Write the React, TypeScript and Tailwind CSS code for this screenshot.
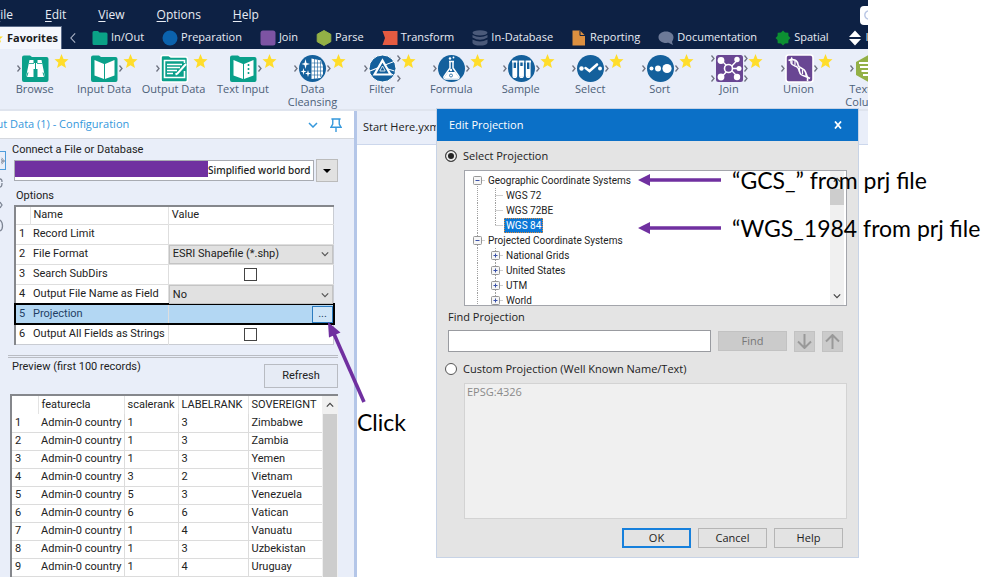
import React from "react";

const WHITE = "#ffffff";

type Cat = { label: string; icon: React.ReactNode };

const categories: Cat[] = [
  { label: "In/Out", icon: <path d="M0.5 2.5Q0.5 1 2 1H6L7.5 2.5H14Q15.5 2.5 15.5 4V13.5Q15.5 15 14 15H2Q0.5 15 0.5 13.5Z" fill="#0aa287" /> },
  { label: "Preparation", icon: <circle cx="8" cy="8" r="7.5" fill="#0b62ad" /> },
  { label: "Join", icon: <rect x="0.5" y="0.5" width="15" height="15" rx="2.5" fill="#7d54a3" /> },
  { label: "Parse", icon: <path d="M8 0.5L14.8 4.3V11.7L8 15.5L1.2 11.7V4.3Z" fill="#93b046" stroke="#93b046" strokeLinejoin="round" /> },
  { label: "Transform", icon: <path d="M0.5 1H15.5V15H0.5L3 8Z" fill="#e55b41" /> },
  {
    label: "In-Database",
    icon: (
      <g fill="#4b5a7a">
        <ellipse cx="8" cy="2.8" rx="7.5" ry="2.6" />
        <path d="M0.5 5Q8 9 15.5 5V7.6Q8 12 0.5 7.6Z" />
        <path d="M0.5 9.5Q8 13.5 15.5 9.5V13Q14 15.6 8 15.6T0.5 13Z" />
      </g>
    ),
  },
  { label: "Reporting", icon: <g><path d="M1.5 0.5H9L14 5.5V15.5H1.5Z" fill="#dd9040" /><path d="M9 0.5V5.5H14" fill="none" stroke="#0d2144" strokeWidth="1" /></g> },
  { label: "Documentation", icon: <path d="M8 1.5C12.5 1.5 15.5 4 15.5 7.2C15.5 9.5 14.2 11 14 12L15 15L10.5 12.8C4.5 13.6 0.5 11 0.5 7.2C0.5 4 3.5 1.5 8 1.5Z" fill="#6d7a98" /> },
  { label: "Spatial", icon: <path d="M8 0.5L10 2.5L13.3 2.7L13.5 6L15.5 8L13.5 10L13.3 13.3L10 13.5L8 15.5L6 13.5L2.7 13.3L2.5 10L0.5 8L2.5 6L2.7 2.7L6 2.5Z" fill="#0c9032" /> },
  { label: "Interface", icon: <path d="M8 0.5L14 7H2ZM2 9H14L8 15.5Z" fill={WHITE} /> },
];

const Folder = () => <path d="M21 3.5Q21 1.5 23 1.5H29L31 3H45.5Q47.5 3 47.5 5V26Q47.5 28 45.5 28H23Q21 28 21 26Z" fill="#0aa08a" />;
const Disc = () => <circle cx="34.5" cy="14.5" r="13.5" fill="#14609c" />;
const Square = () => <rect x="21" y="1" width="27" height="27" rx="2.5" fill="#694693" />;

type Tool = { label: string; left: number[]; right: number[]; art: React.ReactNode };

const tools: Tool[] = [
  {
    label: "Browse", left: [14], right: [],
    art: (
      <g>
        <Folder />
        <path d="M28.5 6H32.5V9H36.5V6H40.5L44 23H36.5V15H32.5V23H25Z" fill={WHITE} />
        <path d="M34.5 9V15M27 18.5L25.5 23M42 18.5L43.5 23" stroke="#0aa08a" strokeWidth="1" />
        <path d="M28 9.5H33M36 9.5H41" stroke="#0aa08a" strokeWidth="0.8" />
      </g>
    ),
  },
  {
    label: "Input Data", left: [], right: [14],
    art: (
      <g>
        <Folder />
        <path d="M24.5 6L34 10V25L24.5 21.5ZM44.5 6L35 10V25L44.5 21.5Z" fill={WHITE} />
      </g>
    ),
  },
  {
    label: "Output Data", left: [14], right: [],
    art: (
      <g fill="none" stroke={WHITE} strokeWidth="1.6">
        <Folder />
        <path d="M44.5 9V6.5H24.5V23.5H44.5V17" />
        <path d="M27 10.5H42M27 13.5H40M27 16.5H37M27 19.5H33" strokeWidth="1.4" />
        <path d="M46 10L37.5 19.5L35.5 20.5" strokeWidth="2" />
      </g>
    ),
  },
  {
    label: "Text Input", left: [], right: [14],
    art: (
      <g>
        <Folder />
        <path d="M24.5 6L34 10V25L24.5 21.5ZM44.5 6L35 10V25L44.5 21.5Z" fill={WHITE} />
        <path d="M39.5 10V22" stroke="#0aa08a" strokeWidth="1.6" strokeDasharray="2 2" />
      </g>
    ),
  },
  {
    label: "Data Cleansing", left: [14], right: [14],
    art: (
      <g>
        <Disc />
        <path d="M33.5 4.5L43 6.5L45 12V20L42.5 24L33.5 25Z" fill={WHITE} />
        <path d="M36.5 5V25M39.5 6V24M42.5 7V23M33.5 9H44M33.5 13H45M33.5 17H45M33.5 21H44" stroke="#14609c" strokeWidth="0.6" />
        <path d="M27.5 5L28.5 9L32 10L28.5 11L27.5 15L26.5 11L23.5 10L26.5 9ZM25.5 14L26.2 16.8L28.5 17.5L26.2 18.2L25.5 21L24.8 18.2L22.5 17.5L24.8 16.8ZM30 16L30.8 18.7L33 19.5L30.8 20.3L30 23L29.2 20.3L27 19.5L29.2 18.7Z" fill={WHITE} />
      </g>
    ),
  },
  {
    label: "Filter", left: [14], right: [4, 24],
    art: (
      <g fill="none" stroke={WHITE}>
        <Disc />
        <path d="M22 17L32 13" strokeWidth="1.2" />
        <path d="M37 11L46 7.5M37 14L46.5 17M38 17L45.5 21" strokeWidth="1" />
        <path d="M34.5 6.5L42.5 20.5H26.5Z" strokeWidth="2.2" fill="#14609c" />
        <path d="M34.5 12L37.2 17H31.8Z" strokeWidth="0.8" />
      </g>
    ),
  },
  {
    label: "Formula", left: [14], right: [14],
    art: (
      <g>
        <Disc />
        <path d="M32 7.5H37M33 8V14L27 22.5Q26.5 25 29 25H40Q42.5 25 42 22.5L36 14V8" fill="none" stroke={WHITE} strokeWidth="1.5" />
        <path d="M31 18H38L41.5 23Q42 24.5 40 24.5H29Q27 24.5 27.5 23Z" fill={WHITE} />
        <circle cx="34" cy="16" r="1.2" fill={WHITE} />
        <circle cx="33" cy="4.5" r="1.2" fill={WHITE} />
        <circle cx="36.5" cy="3.5" r="0.9" fill={WHITE} />
        <circle cx="34" cy="21.5" r="1.5" fill="none" stroke="#14609c" strokeWidth="0.8" />
      </g>
    ),
  },
  {
    label: "Sample", left: [14], right: [14],
    art: (
      <g>
        <Disc />
        <path d="M25 7.5H30.5M31.8 7.5H37.3M38.6 7.5H44" stroke={WHITE} strokeWidth="1.8" />
        <path d="M26 8V21.5Q26 23.5 27.8 23.5T29.6 21.5V8M32.7 8V21.5Q32.7 23.5 34.5 23.5T36.3 21.5V8M39.4 8V21.5Q39.4 23.5 41.2 23.5T43 21.5V8" fill="none" stroke={WHITE} strokeWidth="1.2" />
        <path d="M26 14H29.6V22Q27.8 24 26 22ZM32.7 12H36.3V22Q34.5 24 32.7 22ZM39.4 15H43V22Q41.2 24 39.4 22Z" fill={WHITE} />
      </g>
    ),
  },
  {
    label: "Select", left: [14], right: [14],
    art: (
      <g>
        <Disc />
        <circle cx="25.5" cy="14.5" r="2.2" fill={WHITE} />
        <circle cx="44" cy="14.5" r="2" fill={WHITE} />
        <path d="M29.5 14L33.5 17L41 10.5" fill="none" stroke={WHITE} strokeWidth="2.6" strokeLinecap="round" />
      </g>
    ),
  },
  {
    label: "Sort", left: [14], right: [14],
    art: (
      <g fill={WHITE}>
        <Disc />
        <circle cx="25.5" cy="14.5" r="2" />
        <circle cx="32" cy="14.5" r="3" />
        <circle cx="41" cy="14.5" r="4.6" />
      </g>
    ),
  },
  {
    label: "Join", left: [4, 24], right: [4, 14, 24],
    art: (
      <g fill={WHITE}>
        <Square />
        <path d="M27 7L42 22M42 6.5L27 22.5M34.5 14.5H44" stroke={WHITE} strokeWidth="1.4" />
        <circle cx="26" cy="6.5" r="3.4" />
        <circle cx="42" cy="5.5" r="2.7" />
        <circle cx="44" cy="14.5" r="2.5" />
        <circle cx="26" cy="23" r="3.4" />
        <circle cx="42" cy="23" r="3.2" />
        <circle cx="33.5" cy="14.5" r="4" fill="#694693" stroke={WHITE} strokeWidth="1.6" />
      </g>
    ),
  },
  {
    label: "Union", left: [14], right: [14],
    art: (
      <g fill="none" stroke={WHITE} strokeWidth="1.6">
        <Square />
        <path d="M27 3.500C24.500 8 26 11 30 12C35 13 33.500 18 36 20.500C38.500 22.500 41 22 45 24.500" />
        <path d="M23.500 6.500C28 4.500 32.500 6 33 10.500C33.500 15 39.500 13.500 40.500 18C41 21 43.500 22 42.500 27" />
        <path d="M27 6.500V9.500M30 6.500V11M34.500 14V18M37.500 15.500V20M41 20V23" strokeWidth="1.200" />
      </g>
    ),
  },
  {
    label: "Text To Columns", left: [14], right: [14],
    art: (
      <g>
        <path d="M34.5 1L47 8V21L34.5 28L22 21V8Z" fill="#93b046" />
        <path d="M25 9H44M26 13H43M27.5 17H41.5M29 21H40" stroke={WHITE} strokeWidth="2" />
      </g>
    ),
  },
];

function ToolIcon({ tool }: { tool: Tool }) {
  return (
    <svg viewBox="0 0 68 28" className="h-7 w-[68px] shrink-0 overflow-visible" aria-hidden="true">
      {tool.art}
      {tool.left.map((y) => (
        <path key={y} d={`M16.5 ${y - 2.5}L19 ${y + 0.5}L16.5 ${y + 3.5}`} fill="none" stroke="#6e7280" strokeWidth="1.3" />
      ))}
      {tool.right.map((y) => (
        <path key={y} d={`M49.5 ${y - 2.5}L52 ${y + 0.5}L49.5 ${y + 3.5}`} fill="none" stroke="#6e7280" strokeWidth="1.3" />
      ))}
      <path d="M60.5 0L62.5 5L67.5 5.3L63.6 8.8L65 14L60.5 11.2L56 14L57.4 8.8L53.5 5.3L58.5 5Z" fill="#ffdd2b" />
    </svg>
  );
}

function Chevron({ className }: { className: string }) {
  return (
    <svg viewBox="0 0 10 6" className={className} aria-hidden="true">
      <path d="M1 1L5 5L9 1" fill="none" stroke="currentColor" strokeWidth="1.5" />
    </svg>
  );
}

function ConfigSelect({ label, value }: { label: string; value: string }) {
  return (
    <div className="relative h-full">
      <select aria-label={label} className="block h-full w-full appearance-none border border-[#c4c4c4] bg-[#e1e1e1] px-[3px] leading-4">
        <option>{value}</option>
      </select>
      <Chevron className="pointer-events-none absolute top-1/2 right-1 h-1.5 w-2 -translate-y-1/2 text-[#555]" />
    </div>
  );
}

const options = [
  { name: "Record Limit", kind: "text" },
  { name: "File Format", kind: "select", value: "ESRI Shapefile (*.shp)" },
  { name: "Search SubDirs", kind: "check" },
  { name: "Output File Name as Field", kind: "select", value: "No" },
  { name: "Projection", kind: "button" },
  { name: "Output All Fields as Strings", kind: "check" },
];

const records = [
  ["1", "3", "Zimbabwe"],
  ["1", "3", "Zambia"],
  ["1", "3", "Yemen"],
  ["3", "2", "Vietnam"],
  ["5", "3", "Venezuela"],
  ["6", "6", "Vatican"],
  ["1", "4", "Vanuatu"],
  ["1", "3", "Uzbekistan"],
  ["1", "4", "Uruguay"],
  ["1", "2", "United States"],
];

function OptionsTable() {
  return (
    <table className="mr-1 ml-0.5 h-[140px] table-fixed border-collapse border border-[#c9ccd3] border-t-2 border-t-[#85878c] border-l-2 border-l-[#85878c] bg-white text-left">
      <colgroup>
        <col className="w-[15px]" />
        <col className="w-[137px]" />
        <col />
      </colgroup>
      <thead>
        <tr>
          <th className="border-r border-[#e3e3e3]" aria-label="Row" />
          <th className="border-r border-[#e3e3e3] px-[3px] font-normal">Name</th>
          <th className="px-[3px] font-normal">Value</th>
        </tr>
      </thead>
      <tbody>
        {options.map((o, i) => {
          const selected = o.kind === "button";
          return (
            <tr key={o.name} className={selected ? "bg-[#b3d7f3] text-[#1f3f66] outline-2 -outline-offset-1 outline-black" : "border-t border-[#dedede]"}>
              <td className="px-[3px]">{i + 1}</td>
              <td className="border-r border-[#dedede] px-[3px] whitespace-nowrap">{o.name}</td>
              <td className="h-5 p-0">
                {o.kind === "select" && <ConfigSelect label={o.name} value={o.value ?? ""} />}
                {o.kind === "check" && (
                  <input type="checkbox" aria-label={o.name} className="mx-auto block size-[13px] appearance-none border border-[#444] bg-white" />
                )}
                {selected && (
                  <button aria-label="Choose projection" className="ml-auto block h-[17px] w-[21px] border border-[#2c7cc0] bg-[#cfe5f7] leading-3">
                    ...
                  </button>
                )}
              </td>
            </tr>
          );
        })}
      </tbody>
    </table>
  );
}

function ConfigPanel() {
  return (
    <section className="flex w-[357px] shrink-0 flex-col border-r-3 border-[#b4c6e8] bg-[#e9eef9]">
      <header className="flex h-7 shrink-0 items-center border-b border-[#d5d8de] bg-white font-['Open_Sans','Noto_Sans',sans-serif] text-[11px] text-[#3598dc]">
        <h2 className="-ml-5 flex-1 whitespace-nowrap">Input Data (1) - Configuration</h2>
        <button aria-label="Collapse" className="mr-3">
          <Chevron className="h-1.5 w-2.5" />
        </button>
        <button aria-label="Pin" className="mr-3">
          <svg viewBox="0 0 13 15" className="h-4 w-3" fill="none" stroke="currentColor" strokeWidth="1.5" aria-hidden="true">
            <path d="M1.5 1H11.5M3 1V6.5L1 10H12L10 6.5V1M6.5 10V15" />
          </svg>
        </button>
      </header>
      <div className="flex min-h-0 flex-1">
        <nav className="w-2 shrink-0 overflow-hidden pt-3 text-[#7d8594]">
          <button aria-label="Configuration" className="flex h-[19px] w-1.5 items-center justify-end border border-l-0 border-[#4e9cdb]">
            <svg viewBox="0 0 5 12" className="h-3 w-1" stroke="currentColor" fill="none"><path d="M0 3L2 6L0 9M0 6H5M1 2L4 6L1 10" /></svg>
          </button>
          <svg viewBox="0 0 6 70" className="h-[70px] w-1.5" fill="none" stroke="currentColor" strokeWidth="1.3" aria-hidden="true">
            <path d="M0 9Q2 9 2 12M0 17Q2 17 2 13M0 32L2 35L0 38M0 50Q2.5 52 2.5 56T0 61" />
          </svg>
        </nav>
        <div className="flex min-w-0 flex-1 flex-col pr-4">
          <div className="flex flex-col pl-1">
            <label htmlFor="source" className="pt-0.5 leading-[18px]">Connect a File or Database</label>
            <div className="ml-0.5 flex items-center gap-0.5">
              <div className="flex h-[21px] flex-1 items-start border border-[#a8abb2] bg-white">
                <span className="h-4 w-[193px] shrink-0 bg-[#7030a0]" />
                <input id="source" defaultValue="Simplified world bord" className="h-[18px] w-0 flex-1 bg-transparent font-['Noto_Sans','Open_Sans',sans-serif] text-[10px] font-medium" />
              </div>
              <button aria-label="Choose source" className="flex h-[23px] w-[22px] items-center justify-center border border-[#bbb] bg-[#e1e1e1]">
                <svg viewBox="0 0 8 4" className="h-1 w-2" aria-hidden="true"><path d="M0 0H8L4 4Z" /></svg>
              </button>
            </div>
            <h3 className="ml-1 pt-1 leading-[19px]">Options</h3>
            <OptionsTable />
          </div>
          <hr className="mt-2.5 h-[3px] shrink-0 border-y border-[#b9bcc3]" />
          <div className="flex items-center justify-between pl-1">
            <h3 className="mb-3 leading-4">Preview (first 100 records)</h3>
            <button className="mt-1.5 h-6 w-[74px] border border-[#b8bbc2] bg-[#e6ebf5]">Refresh</button>
          </div>
          <div className="mt-1.5 ml-0.5 flex min-h-0 flex-1 overflow-hidden border-t-2 border-l-2 border-[#85878c] bg-white">
            <div className="min-w-0 flex-1 overflow-hidden">
              <table className="w-full table-fixed border-collapse text-left whitespace-nowrap">
                <colgroup>
                  <col className="w-[26px]" />
                  <col className="w-[86px]" />
                  <col className="w-[54px]" />
                  <col className="w-[70px]" />
                  <col />
                </colgroup>
                <thead>
                  <tr className="h-[18px]">
                    <th className="border-r border-[#e3e3e3]" aria-label="Row" />
                    {["featurecla", "scalerank", "LABELRANK", "SOVEREIGNT"].map((h) => (
                      <th key={h} className="border-r border-[#e3e3e3] px-[3px] font-normal last:border-r-0">{h}</th>
                    ))}
                  </tr>
                </thead>
                <tbody>
                  {records.map((r, i) => (
                    <tr key={r[2]} className="h-[18px] border-b border-[#dcdcdc]">
                      <td className="px-[3px]">{i + 1}</td>
                      <td className="px-[3px]">Admin-0 country</td>
                      {r.map((v, j) => (
                        <td key={j} className="border-l border-[#dcdcdc] px-[3px]">{v}</td>
                      ))}
                    </tr>
                  ))}
                </tbody>
              </table>
            </div>
            <div className="flex w-4 flex-col items-center bg-[#f0f0f0]">
              <Chevron className="my-1.5 h-1.5 w-2 rotate-180 text-[#444]" />
              <div className="w-3.5 flex-1 bg-[#cdcdcd]" />
            </div>
          </div>
        </div>
      </div>
    </section>
  );
}

type Node = { label: string; level: 0 | 1; box?: "+" | "-"; last?: boolean; selected?: boolean };

const tree: Node[] = [
  { label: "Geographic Coordinate Systems", level: 0, box: "-" },
  { label: "WGS 72", level: 1 },
  { label: "WGS 72BE", level: 1 },
  { label: "WGS 84", level: 1, last: true, selected: true },
  { label: "Projected Coordinate Systems", level: 0, box: "-" },
  { label: "National Grids", level: 1, box: "+" },
  { label: "United States", level: 1, box: "+" },
  { label: "UTM", level: 1, box: "+" },
  { label: "World", level: 1, box: "+" },
];

function TreeRow({ node, first }: { node: Node; first: boolean }) {
  const cx = node.level === 0 ? 12.5 : 30.5;
  const width = node.level === 0 ? 21 : 39;
  return (
    <li className="flex h-[15px] items-center">
      <svg viewBox={`0 0 ${width} 15`} className={node.level === 0 ? "h-[15px] w-[21px] shrink-0" : "h-[15px] w-[39px] shrink-0"} fill="none" aria-hidden="true">
        <g stroke="#a0a0a0" strokeDasharray="1 1">
          <path d={first ? "M12.5 7V15" : "M12.5 0V15"} />
          {node.level === 1 && <path d={node.last ? "M30.5 0V7.5" : "M30.5 0V15"} />}
          <path d={`M${cx} 7.5H${cx + 8}`} />
        </g>
        {node.box && (
          <g>
            <rect x={cx - 4} y="3.5" width="8" height="8" rx="1" fill="#f6f6f6" stroke="#979797" />
            <path d={`M${cx - 2} 7.5H${cx + 2}${node.box === "+" ? `M${cx} 5.5V9.5` : ""}`} stroke="#3a51a8" />
          </g>
        )}
      </svg>
      <span className={node.selected ? "border border-dotted border-[#e08a3c] bg-[#0b78d7] px-px leading-[13px] text-white" : "px-0.5 leading-[15px]"}>{node.label}</span>
    </li>
  );
}

const dialogButton = "h-5 w-[69px] border border-[#b5b5b5] bg-[#e3e3e3]";

function ProjectionDialog() {
  return (
    <div role="dialog" aria-labelledby="dialog-title" className="absolute top-[108px] right-[141px] left-[436px] border border-[#c7d3e6] bg-[#e4e4e4] font-['Open_Sans','Noto_Sans',sans-serif] text-[11px] text-[#222]">
      <header className="flex h-8 items-center justify-between bg-[#0b70c7] px-3 text-white">
        <h2 id="dialog-title">Edit Projection</h2>
        <button aria-label="Close" className="flex size-4 items-center justify-center">
          <svg viewBox="0 0 8 8" className="size-2" stroke="#fff" strokeWidth="1.8" aria-hidden="true"><path d="M1 0.5L7 7.5M7 0.5L1 7.5" /></svg>
        </button>
      </header>
      <div className="pt-1.5 pr-[11px] pb-[9px] pl-2">
        <label className="flex h-[18px] items-center gap-1.5">
          <input type="radio" name="mode" defaultChecked className="size-3 appearance-none rounded-full border border-[#444] bg-[#222] shadow-[inset_0_0_0_2px_#e9e9e9]" />
          Select Projection
        </label>
        <div className="mt-[5px] ml-[19px] flex h-[136px] border border-[#a3a5ab] bg-white font-[Roboto,'Liberation_Sans',sans-serif]">
          <ul className="flex-1 overflow-hidden pt-0.5 text-[10px] whitespace-nowrap">
            {tree.map((n, i) => (
              <TreeRow key={n.label} node={n} first={i === 0} />
            ))}
          </ul>
          <div className="mr-0.5 flex w-3.5 flex-col items-center bg-[#f0f0f0] text-[#444]">
            <Chevron className="my-1.5 h-1.5 w-2 shrink-0 rotate-180" />
            <div className="h-4 w-full shrink-0 bg-[#cdcdcd]" />
            <Chevron className="mt-auto mb-1.5 h-1.5 w-2 shrink-0" />
          </div>
        </div>
        <label htmlFor="find" className="ml-[3px] block h-6 leading-[22px]">Find Projection</label>
        <div className="ml-[3px] flex items-center gap-[7px] pr-1">
          <input id="find" className="h-[22px] min-w-0 flex-1 border border-[#999ba0] bg-white px-1" />
          <button disabled className="h-5 w-[69px] border border-[#c2c2c2] bg-[#cbcbcb] text-[#777]">Find</button>
          <button disabled aria-label="Find next" className="flex size-[21px] items-center justify-center border border-[#c2c2c2] bg-[#cbcbcb]">
            <svg viewBox="0 0 15 15" className="size-[15px]" fill="none" stroke="#999" strokeWidth="2" aria-hidden="true"><path d="M7.5 0V14M1 7.5L7.5 14L14 7.5" /></svg>
          </button>
          <button disabled aria-label="Find previous" className="flex size-[21px] items-center justify-center border border-[#c2c2c2] bg-[#cbcbcb]">
            <svg viewBox="0 0 15 15" className="size-[15px]" fill="none" stroke="#999" strokeWidth="2" aria-hidden="true"><path d="M7.5 15V1M1 7.5L7.5 1L14 7.5" /></svg>
          </button>
        </div>
        <label className="mt-2 flex h-[18px] items-center gap-1.5">
          <input type="radio" name="mode" className="size-3 appearance-none rounded-full border border-[#555] bg-white" />
          Custom Projection (Well Known Name/Text)
        </label>
        <div className="mt-[5px] ml-[19px]">
          <textarea aria-label="Custom projection text" disabled defaultValue="EPSG:4326" className="block h-[136px] w-full resize-none border border-[#d3d3d3] bg-[#f0f0f0] px-0.5 text-[#8a8a8a]" />
        </div>
        <div className="mt-[9px] flex justify-end gap-[7px] pr-1">
          <button className="h-5 w-[69px] border-2 border-[#1680dc] bg-[#e3e3e3]">OK</button>
          <button className={dialogButton}>Cancel</button>
          <button className={dialogButton}>Help</button>
        </div>
      </div>
    </div>
  );
}

function Callout({ text, className }: { text: string; className: string }) {
  return (
    <div className={className}>
      <svg viewBox="0 0 83 12" className="h-3 w-[83px] shrink-0" aria-hidden="true">
        <path d="M0 6L12 0V4.2H83V7.8H12V12Z" fill="#7030a0" />
      </svg>
      <span>{text}</span>
    </div>
  );
}

export default function App() {
  return (
    <div className="relative h-screen overflow-hidden bg-white font-[Roboto,'Liberation_Sans',sans-serif] text-[11px] text-[#222]">
      <main className="mr-[132px] flex h-full flex-col overflow-hidden">
        <div className="shrink-0 bg-[#0d2144] font-['Open_Sans','Noto_Sans',sans-serif] text-[#e8ecf4]">
          <nav className="-ml-1.5 flex h-[26px] items-center gap-8 pt-1 text-xs">
            {["File", "Edit", "View", "Options", "Help"].map((m) => (
              <a key={m} href={`#${m}`}>
                <span className="underline underline-offset-2">{m[0]}</span>
                {m.slice(1)}
              </a>
            ))}
            <div className="-mr-3 ml-auto flex h-[19px] w-5 items-center rounded-sm bg-white pl-1">
              <svg viewBox="0 0 12 12" className="size-3 shrink-0" fill="none" stroke="#b9c6e4" strokeWidth="1.4" aria-hidden="true"><circle cx="5" cy="6" r="4.2" /></svg>
              <input aria-label="Search" className="w-0 min-w-0 flex-1" />
            </div>
          </nav>
          <div className="flex h-[23px] items-center">
            <button className="flex h-full w-[62px] shrink-0 items-center overflow-hidden border-t border-r border-[#5a6a88] bg-[#f4f7fd] font-bold text-[#1a1a1a]">
              <svg viewBox="0 0 4 10" className="mr-[3px] h-2.5 w-1 shrink-0" aria-hidden="true"><path d="M-3 0L-1 3.5H3L0 6L1 9.5L-3 7Z" fill="#ffdd2b" /></svg>
              Favorites
            </button>
            <button aria-label="Previous categories" className="mr-4 ml-2 shrink-0">
              <svg viewBox="0 0 7 12" className="h-3 w-1.5" fill="none" stroke="#aab3c6" strokeWidth="1.3" aria-hidden="true"><path d="M6 0.5L1 6L6 11.5" /></svg>
            </button>
            <div className="flex gap-[18px]">
              {categories.map((c) => (
                <button key={c.label} className="flex shrink-0 items-center gap-[3px] font-medium">
                  <svg viewBox="0 0 16 16" className="size-4 shrink-0" aria-hidden="true">{c.icon}</svg>
                  {c.label}
                </button>
              ))}
            </div>
          </div>
        </div>
        <div className="grid h-[60px] w-[104%] shrink-0 grid-cols-13 bg-[#e9eef9] pt-[5px] font-['Open_Sans','Noto_Sans',sans-serif] text-[11px] leading-[13px] text-[#4c6078]">
          {tools.map((t) => (
            <button key={t.label} className="flex min-w-0 flex-col items-center">
              <ToolIcon tool={t} />
              <span className={t.label.length > 11 ? "w-14" : "whitespace-nowrap"}>{t.label}</span>
            </button>
          ))}
        </div>
        <div className="flex min-h-0 flex-1 border-t-2 border-[#dfe4ee]">
          <ConfigPanel />
          <div className="flex-1 bg-white">
            <div className="flex h-[34px] items-center border-b border-[#ccd7ec] bg-[#e9eef9] pl-1.5 font-['Open_Sans','Noto_Sans',sans-serif]">Start Here.yxmd</div>
          </div>
        </div>
      </main>
      <ProjectionDialog />
      <div className="font-[Lato,'Open_Sans',sans-serif] text-[23px] leading-6 whitespace-nowrap text-black">
        <Callout text="“GCS_” from prj file" className="absolute top-[168px] left-[638px] flex items-center gap-[11px]" />
        <Callout text="“WGS_1984 from prj file" className="absolute top-[216px] left-[638px] flex items-center gap-[11px]" />
        <svg viewBox="0 0 42 84" className="absolute top-[320px] left-[326px] h-[84px] w-[42px]" aria-hidden="true">
          <path d="M38 82L8 14" stroke="#7030a0" strokeWidth="3.6" />
          <path d="M2 2L14.5 12.5L3 17.5Z" fill="#7030a0" />
        </svg>
        <p className="absolute top-[410px] left-[357px]">Click</p>
      </div>
    </div>
  );
}
